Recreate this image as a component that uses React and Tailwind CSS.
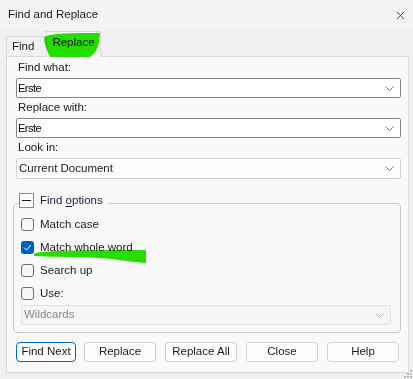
import { X } from "lucide-react";

const font = { fontFamily: '"Liberation Sans", Arial, sans-serif' };

function Chevron({ color = "#666666" }) {
  return (
    <svg width="9" height="5" viewBox="0 0 9 5" className="shrink-0">
      <path d="M0.5 0.5 L4.5 4.5 L8.5 0.5" fill="none" stroke={color} strokeWidth="0.9" />
    </svg>
  );
}

function Combo({ value, edit = true, disabled = false, className = "" }) {
  const border = disabled ? "border-[#e3e3e3]" : edit ? "border-[#858585]" : "border-[#d3d3d3]";
  const bg = disabled ? "bg-[#f5f5f5]" : edit ? "bg-white" : "bg-[#fdfdfd]";
  return (
    <div className={`flex items-center justify-between border rounded-[2px] ${border} ${bg} ${className}`}>
      <span
        className={`pl-[1px] ${edit ? "text-[11px] tracking-[-0.5px] text-black" : "pl-[2px] text-[11.5px]"} ${
          disabled ? "text-[#8a8a8a]" : "text-[#1b1b1b]"
        }`}
      >
        {value}
      </span>
      <span className="pr-[6px]">
        <Chevron color={disabled ? "#b0b0b0" : "#666666"} />
      </span>
    </div>
  );
}

function Label({ children }) {
  return <div className="h-[20px] flex items-center pl-[11px] text-[11.5px] text-[#1b1b1b]">{children}</div>;
}

function Check({ label, checked = false }) {
  return (
    <div className="h-[23px] flex items-center gap-[6px]">
      {checked ? (
        <span className="w-[13px] h-[13px] rounded-[3px] bg-[#005fb8] flex items-center justify-center">
          <svg width="9" height="7" viewBox="0 0 9 7">
            <path d="M1 3.5 L3.5 6 L8 1" fill="none" stroke="white" strokeWidth="1" />
          </svg>
        </span>
      ) : (
        <span className="w-[13px] h-[13px] rounded-[3px] border border-[#6f6f6f] bg-[#f6f6f6]" />
      )}
      <span className="text-[11.5px] text-[#1b1b1b]">{label}</span>
    </div>
  );
}

function Btn({ children, primary = false, className = "" }) {
  return (
    <button
      type="button"
      className={`h-[20px] rounded-[4px] border text-[11.5px] text-[#1b1b1b] flex items-center justify-center ${
        primary ? "border-[#0067c0] bg-[#fdfdfd]" : "border-[#d0d0d0] bg-[#fdfdfd]"
      } ${className}`}
    >
      {children}
    </button>
  );
}

export default function App() {
  return (
    <div style={font} className="relative w-[413px] h-[379px] overflow-hidden bg-[#f0f0f0] flex flex-col">
      {/* title bar */}
      <div className="h-[30px] shrink-0 bg-[#f3f3f6] flex items-center justify-between pl-[8px] pr-[6px]">
        <span className="text-[11.5px] text-[#1b1b1b]">Find and Replace</span>
        <X className="w-[13px] h-[13px] text-[#1b1b1b]" strokeWidth={1.4} />
      </div>

      {/* tabs */}
      <div className="h-[26px] shrink-0 flex items-end pl-[6px]">
        <div className="h-[20px] w-[40px] border-l border-t border-[#d9d9d9] bg-[#f0f0f0] flex items-center pl-[5px] text-[11.5px] text-[#1b1b1b]">
          Find
        </div>
        <div className="relative z-10 -mb-[1px] h-[26px] w-[55px] border-l border-t border-r border-[#d9d9d9] bg-[#f9f9f9] flex items-center justify-center pb-[3px] text-[11.5px] text-[#1b1b1b]">
          Replace
        </div>
      </div>

      {/* tab page */}
      <div className="ml-[6px] mr-[4px] h-[317px] border border-[#d9d9d9] bg-[#f9f9f9] pt-[1px] flex flex-col">
        <Label>Find what:</Label>
        <Combo value="Erste" className="ml-[9px] w-[385px] h-[20px]" />
        <Label>Replace with:</Label>
        <Combo value="Erste" className="ml-[9px] w-[385px] h-[20px]" />
        <Label>Look in:</Label>
        <Combo value="Current Document" edit={false} className="ml-[9px] w-[385px] h-[21px]" />

        <fieldset className="ml-[6px] mt-[14px] w-[388px] border border-[#c9c9c9] rounded-[4px] pl-[7px] pb-[7px]">
          <legend className="ml-[-2px] pr-[5px] h-[20px] flex items-start gap-[6px]">
            <span className="w-[15px] h-[15px] border border-[#8a8a8a] bg-white flex items-center justify-center">
              <span className="w-[9px] h-px bg-[#1b1b1b]" />
            </span>
            <span className="text-[11.5px] leading-[15px] text-[#1c1c3c]">
              Find <span className="underline underline-offset-[2px]">o</span>ptions
            </span>
          </legend>
          <Check label="Match case" />
          <Check label="Match whole word" checked />
          <Check label="Search up" />
          <Check label="Use:" />
          <Combo value="Wildcards" edit={false} disabled className="w-[370px] h-[20px]" />
        </fieldset>

        <div className="mt-[9px] ml-[9px] flex gap-[9px]">
          <Btn primary className="w-[60px]">Find Next</Btn>
          <Btn className="w-[72px] -ml-[1px]">Replace</Btn>
          <Btn className="w-[72px]">Replace All</Btn>
          <Btn className="w-[72px]">Close</Btn>
          <Btn className="w-[72px]">Help</Btn>
        </div>
      </div>

      {/* resize grip */}
      <svg className="absolute right-[1px] bottom-[1px]" width="9" height="9" viewBox="0 0 9 9">
        {[[7, 1], [4, 4], [7, 4], [1, 7], [4, 7], [7, 7]].map(([x, y]) => (
          <rect key={`${x}-${y}`} x={x} y={y} width="2" height="2" fill="#b8b8b8" />
        ))}
      </svg>

      {/* marker highlights */}
      <svg className="absolute inset-0 z-20 pointer-events-none mix-blend-multiply" width="413" height="379" viewBox="0 0 413 379">
        <path d="M44 38 C46 34 60 33 100 33 L99 42 C98 48 96 52 90 57 L50 57 C48 52 45 47 44 38 Z" fill="#26e400" />
        <path d="M34 254 C38 251 60 250 146 250 L146 263 C130 262 115 259 100 258 C70 257 45 257 34 256 Z" fill="#26e400" />
      </svg>
    </div>
  );
}
